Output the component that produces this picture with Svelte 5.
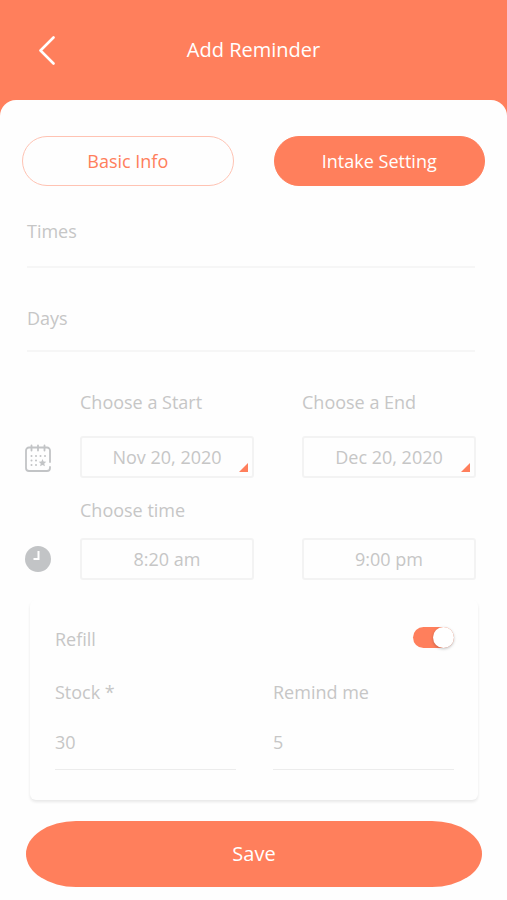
<script>
  let tab = $state('intake');
  let refill = $state(true);

  let form = $state({
    times: '',
    days: '',
    startDate: 'Nov 20, 2020',
    endDate: 'Dec 20, 2020',
    startTime: '8:20 am',
    endTime: '9:00 pm',
    stock: '30',
    remind: '5'
  });
</script>

<div class="page">
  <header class="header">
    <button class="back" type="button" aria-label="Back">
      <svg width="18" height="30" viewBox="0 0 18 30" fill="none" stroke="currentColor" stroke-width="2.6" stroke-linecap="round" stroke-linejoin="round"><polyline points="15.5 2.5 2.5 15.5 15.5 28.5"></polyline></svg>
    </button>
    <h1 class="title">Add Reminder</h1>
  </header>

  <main class="sheet">
    <div class="tabs">
      <button type="button" class="tab" class:active={tab === 'basic'} onclick={() => (tab = 'basic')}>Basic Info</button>
      <button type="button" class="tab" class:active={tab === 'intake'} onclick={() => (tab = 'intake')}>Intake Setting</button>
    </div>

    <form onsubmit={(e) => e.preventDefault()}>
      <div class="lines">
        <label class="line">
          <span>Times</span>
          <input type="text" bind:value={form.times} />
        </label>
        <label class="line">
          <span>Days</span>
          <input type="text" bind:value={form.days} />
        </label>
      </div>

      <div class="schedule">
        <div class="schedule-row">
          <svg class="icon" width="26" height="28" viewBox="0 0 26 28" fill="none" stroke="currentColor" stroke-linecap="round">
            <path d="M25 18V6.500a3 3 0 0 0-3-3H4a3 3 0 0 0-3 3V24a3 3 0 0 0 3 3h18a3 3 0 0 0 3-3v-1" stroke-width="1.8" />
            <path d="M6.500 1.500v5M13 1.500v5M19.500 1.500v5" stroke-width="1.8" />
            <path d="M6.500 12h.01M11 12h.01M15.500 12h.01M20 12h.01M6.500 16.500h.01M11 16.500h.01M6.500 21h.01M11 21h.01" stroke-width="2" />
            <path d="M17.500 15l1.100 2.500 2.700.3-2 1.800.6 2.700-2.400-1.400-2.400 1.400.6-2.700-2-1.800 2.700-.3z" fill="currentColor" stroke="none" />
          </svg>
          <div class="pair">
            <label class="field">
              <span>Choose a Start</span>
              <div class="box marked"><input type="text" bind:value={form.startDate} /></div>
            </label>
            <label class="field">
              <span>Choose a End</span>
              <div class="box marked"><input type="text" bind:value={form.endDate} /></div>
            </label>
          </div>
        </div>

        <div class="schedule-row">
          <svg class="icon" width="26" height="28" viewBox="0 0 26 28" fill="none">
            <circle cx="13" cy="13" r="13" fill="currentColor" />
            <path d="M13.500 5v8H8.500" stroke="#fff" stroke-width="2" />
          </svg>
          <div class="pair">
            <label class="field">
              <span>Choose time</span>
              <div class="box"><input type="text" bind:value={form.startTime} /></div>
            </label>
            <div class="field">
              <div class="box"><input type="text" aria-label="End time" bind:value={form.endTime} /></div>
            </div>
          </div>
        </div>
      </div>

      <section class="card">
        <label class="refill">
          <span>Refill</span>
          <input class="switch" type="checkbox" role="switch" bind:checked={refill} />
        </label>
        <div class="amounts">
          <label class="amount">
            <span>Stock *</span>
            <input type="text" inputmode="numeric" bind:value={form.stock} />
          </label>
          <label class="amount">
            <span>Remind me</span>
            <input type="text" inputmode="numeric" bind:value={form.remind} />
          </label>
        </div>
      </section>

      <button class="save" type="submit">Save</button>
    </form>
  </main>
</div>

<style>
  :global(body) {
    margin: 0;
    background-color: #fefefe;
  }

  .page {
    --accent: #ff7f5c;
    --muted: #c6c6c6;
    --line: #f3f3f3;
    background-color: var(--accent);
    color: var(--muted);
    font-family: "Open Sans", "Noto Sans", sans-serif;
    font-size: 18px;
    line-height: 24px;
  }

  .page * {
    box-sizing: border-box;
  }

  button,
  input {
    font: inherit;
    color: inherit;
    border: none;
    background: none;
    margin: 0;
    padding: 0;
    min-width: 0;
  }

  button {
    cursor: pointer;
  }

  input:focus {
    outline: none;
  }

  .header {
    display: grid;
    grid-template-columns: 60px 1fr 60px;
    align-items: center;
    height: 100px;
    color: #fff;
  }

  .back {
    display: flex;
    justify-content: flex-end;
    padding-right: 4px;
  }

  .title {
    margin: 0;
    text-align: center;
    font-size: 20px;
    font-weight: 400;
  }

  .sheet {
    background-color: #fefefe;
    border-radius: 16px 16px 0 0;
    padding: 36px 22px 13px;
  }

  .tabs {
    display: grid;
    grid-template-columns: 1fr 1fr;
    gap: 40px;
  }

  .tab {
    height: 50px;
    border: 1px solid #ffc3b3;
    border-radius: 25px;
    color: var(--accent);
  }

  .tab.active {
    border-color: var(--accent);
    background-color: var(--accent);
    color: #fff;
  }

  .lines {
    padding: 0 10px 0 5px;
  }

  .line {
    display: flex;
    gap: 12px;
    padding: 33px 0 23px;
    border-bottom: 2px solid #f6f6f6;
  }

  .line + .line {
    padding: 38px 0 20px;
  }

  .line input {
    flex: 1;
  }

  .schedule {
    display: flex;
    flex-direction: column;
    gap: 20px;
    padding: 38px 9px 0 3px;
  }

  .schedule-row {
    display: flex;
    align-items: flex-end;
    gap: 29px;
  }

  .icon {
    flex: none;
    margin-bottom: 6px;
    color: #c2c4c6;
  }

  .pair {
    flex: 1;
    display: grid;
    grid-template-columns: 1fr 1fr;
    gap: 48px;
    align-items: end;
  }

  .field {
    display: flex;
    flex-direction: column;
    gap: 22px;
  }

  .schedule-row + .schedule-row .field {
    gap: 16px;
  }

  .box {
    position: relative;
    height: 42px;
    border: 2px solid var(--line);
    border-radius: 3px;
  }

  .box input {
    width: 100%;
    height: 100%;
    text-align: center;
  }

  .marked::after {
    content: '';
    position: absolute;
    right: 4px;
    bottom: 4px;
    width: 9px;
    height: 9px;
    background-color: var(--accent);
    clip-path: polygon(100% 0, 100% 100%, 0 100%);
  }

  .card {
    margin: 20px 7px 0 8px;
    padding: 27px 24px 30px 25px;
    border-radius: 6px;
    box-shadow: 0 2px 3px #e8e8e8;
  }

  .refill {
    display: flex;
    align-items: flex-start;
    justify-content: space-between;
  }

  .switch {
    appearance: none;
    display: flex;
    align-items: center;
    width: 41px;
    height: 21px;
    border-radius: 11px;
    background-color: #e0e0e0;
    cursor: pointer;
  }

  .switch::before {
    content: '';
    width: 21px;
    height: 21px;
    border-radius: 50%;
    background-color: #fff;
    box-shadow: 0 1px 3px rgba(0, 0, 0, 0.25);
  }

  .switch:checked {
    justify-content: flex-end;
    background-color: var(--accent);
  }

  .amounts {
    display: grid;
    grid-template-columns: minmax(0, 1fr) minmax(0, 1fr);
    gap: 37px;
    margin-top: 29px;
  }

  .amount {
    display: flex;
    flex-direction: column;
    gap: 18px;
  }

  .amount input {
    height: 48px;
    padding-bottom: 8px;
    border-bottom: 1px solid #ececec;
  }

  .save {
    display: block;
    width: calc(100% - 7px);
    height: 66px;
    margin: 21px 3px 0 4px;
    border-radius: 50px / 33px;
    background-color: var(--accent);
    color: #fff;
    font-size: 20px;
  }
</style>
